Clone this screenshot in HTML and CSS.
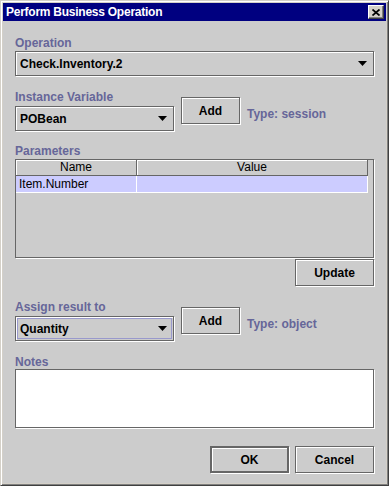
FILE: index.html
```html
<!DOCTYPE html>
<html lang="en">
<head>
  <meta charset="UTF-8">
  <meta name="viewport" content="width=device-width, initial-scale=1.0">
  <title>Perform Business Operation</title>
  <link rel="stylesheet" href="styles.css">
</head>
<body>

<div class="window">
  <div class="titlebar">
    <span class="title">Perform Business Operation</span>
    <span class="close-btn">
      <svg width="8" height="7" viewBox="0 0 8 7"><path d="M0.5 0.5 L7.5 6.5 M7.5 0.5 L0.5 6.5" stroke="#000" stroke-width="1.7"/></svg>
    </span>
  </div>

  <div class="panel">
    <div class="field-label first">Operation</div>
    <div class="combo">
      <span class="combo-value">Check.Inventory.2</span>
      <svg class="arrow" width="9" height="5" viewBox="0 0 9 5"><polygon points="0,0 9,0 4.5,5" fill="#000"/></svg>
    </div>

    <!-- インスタンス変数 -->
    <div class="var-row">
      <div class="var-col">
        <div class="field-label">Instance Variable</div>
        <div class="combo combo-small">
          <span class="combo-value">POBean</span>
          <svg class="arrow" width="9" height="5" viewBox="0 0 9 5"><polygon points="0,0 9,0 4.5,5" fill="#000"/></svg>
        </div>
      </div>
      <div class="button btn-add">Add</div>
      <div class="type-label">Type: session</div>
    </div>

    <div class="field-label params-label">Parameters</div>
    <div class="scroll-pane">
      <div class="table-head">
        <div class="head-cell col-name">Name</div>
        <div class="head-cell col-value">Value</div>
      </div>
      <div class="table-row selected">
        <div class="cell col-name">Item.Number</div>
        <div class="cell col-value"></div>
      </div>
    </div>
    <div class="button btn-wide btn-update">Update</div>

    <!-- 結果の代入先 -->
    <div class="var-row assign-row">
      <div class="var-col">
        <div class="field-label">Assign result to</div>
        <div class="combo combo-small focused">
          <span class="combo-value">Quantity</span>
          <svg class="arrow" width="9" height="5" viewBox="0 0 9 5"><polygon points="0,0 9,0 4.5,5" fill="#000"/></svg>
        </div>
      </div>
      <div class="button btn-add">Add</div>
      <div class="type-label">Type: object</div>
    </div>

    <div class="field-label notes-label">Notes</div>
    <div class="notes"></div>

    <div class="footer">
      <div class="button btn-wide btn-default">OK</div>
      <div class="button btn-wide">Cancel</div>
    </div>
  </div>
</div>

</body>
</html>
```

FILE: styles.css
```css
body {
  margin: 0;
  background: #cccccc;
  font-family: 'Liberation Sans', Arial, sans-serif;
  font-size: 12px;
  color: #000;
}
.window {
  width: 389px;
  height: 486px;
  box-sizing: border-box;
  display: flex;
  flex-direction: column;
  background: #d4d0c8;
  border: 1px solid;
  border-color: #d4d0c8 #404040 #404040 #d4d0c8;
  box-shadow: inset 1px 1px 0 #fff, inset -1px -1px 0 #808080;
  padding: 2px;
}
.titlebar {
  height: 18px;
  flex: none;
  background: #000080;
  display: flex;
  align-items: center;
  justify-content: space-between;
  padding: 0 2px 0 3px;
}
.title {
  color: #fff;
  font-weight: bold;
  line-height: 14px;
  letter-spacing: -0.25px;
}
.close-btn {
  width: 16px;
  height: 14px;
  box-sizing: border-box;
  display: flex;
  align-items: center;
  justify-content: center;
  background: #d4d0c8;
  border: 1px solid;
  border-color: #fff #404040 #404040 #fff;
  box-shadow: inset -1px -1px 0 #808080;
}
.panel {
  flex: 1;
  display: flex;
  flex-direction: column;
  background: #cccccc;
  padding: 0 12px;
}
.field-label {
  color: #666699;
  font-weight: bold;
  line-height: 14px;
  height: 14px;
  white-space: nowrap;
}
.field-label.first {
  margin-top: 15px;
  margin-bottom: 1px;
}
.combo {
  height: 25px;
  box-sizing: border-box;
  display: flex;
  align-items: center;
  padding: 0 6px 0 4px;
  border: 1px solid #666;
  box-shadow: 1px 1px 0 #fff, inset 1px 1px 0 #fff;
  font-weight: bold;
  line-height: 14px;
}
.combo-small {
  width: 159px;
}
.combo.focused {
  box-shadow: 1px 1px 0 #fff, inset 1px 1px 0 #fff, inset 0 0 0 1px #cccccc, inset 0 0 0 2px #9999cc;
}
.combo-value {
  flex: 1;
}
.arrow {
  display: block;
}
.var-row {
  display: flex;
  align-items: flex-start;
  gap: 7px;
  margin-top: 14px;
}
.var-col {
  display: flex;
  flex-direction: column;
  gap: 2px;
}
.button {
  height: 27px;
  box-sizing: border-box;
  display: flex;
  align-items: center;
  justify-content: center;
  border: 1px solid #666;
  box-shadow: 1px 1px 0 #fff, inset 1px 1px 0 #fff;
  font-weight: bold;
  background: #cccccc;
}
.btn-add {
  width: 59px;
  margin-top: 7px;
}
.btn-wide {
  width: 79px;
}
.btn-default {
  border-width: 2px;
}
.type-label {
  color: #666699;
  font-weight: bold;
  line-height: 14px;
  margin-top: 17px;
  white-space: nowrap;
}
.params-label {
  margin-top: 13px;
  margin-bottom: 1px;
}
.scroll-pane {
  height: 99px;
  box-sizing: border-box;
  border: 1px solid #666;
  box-shadow: 1px 1px 0 #fff;
}
.table-head, .table-row {
  display: flex;
  width: 352px;
}
.head-cell {
  height: 16px;
  box-sizing: border-box;
  border-right: 1px solid #666;
  border-bottom: 1px solid #666;
  box-shadow: inset 1px 1px 0 #fff;
  text-align: center;
  line-height: 15px;
}
.col-name {
  width: 121px;
}
.col-value {
  width: 231px;
}
.cell {
  height: 17px;
  box-sizing: border-box;
  border-right: 1px solid #fff;
  border-bottom: 1px solid #fff;
  padding-left: 3px;
  line-height: 16px;
  white-space: nowrap;
}
.selected .cell {
  background: #ccccff;
}
.btn-update {
  align-self: flex-end;
  margin-top: 1px;
}
.notes-label {
  margin-top: 14px;
}
.notes {
  height: 59px;
  box-sizing: border-box;
  background: #fff;
  border: 1px solid #666;
  box-shadow: 1px 1px 0 #fff;
}
.footer {
  display: flex;
  justify-content: flex-end;
  gap: 6px;
  margin-top: 18px;
}
```
